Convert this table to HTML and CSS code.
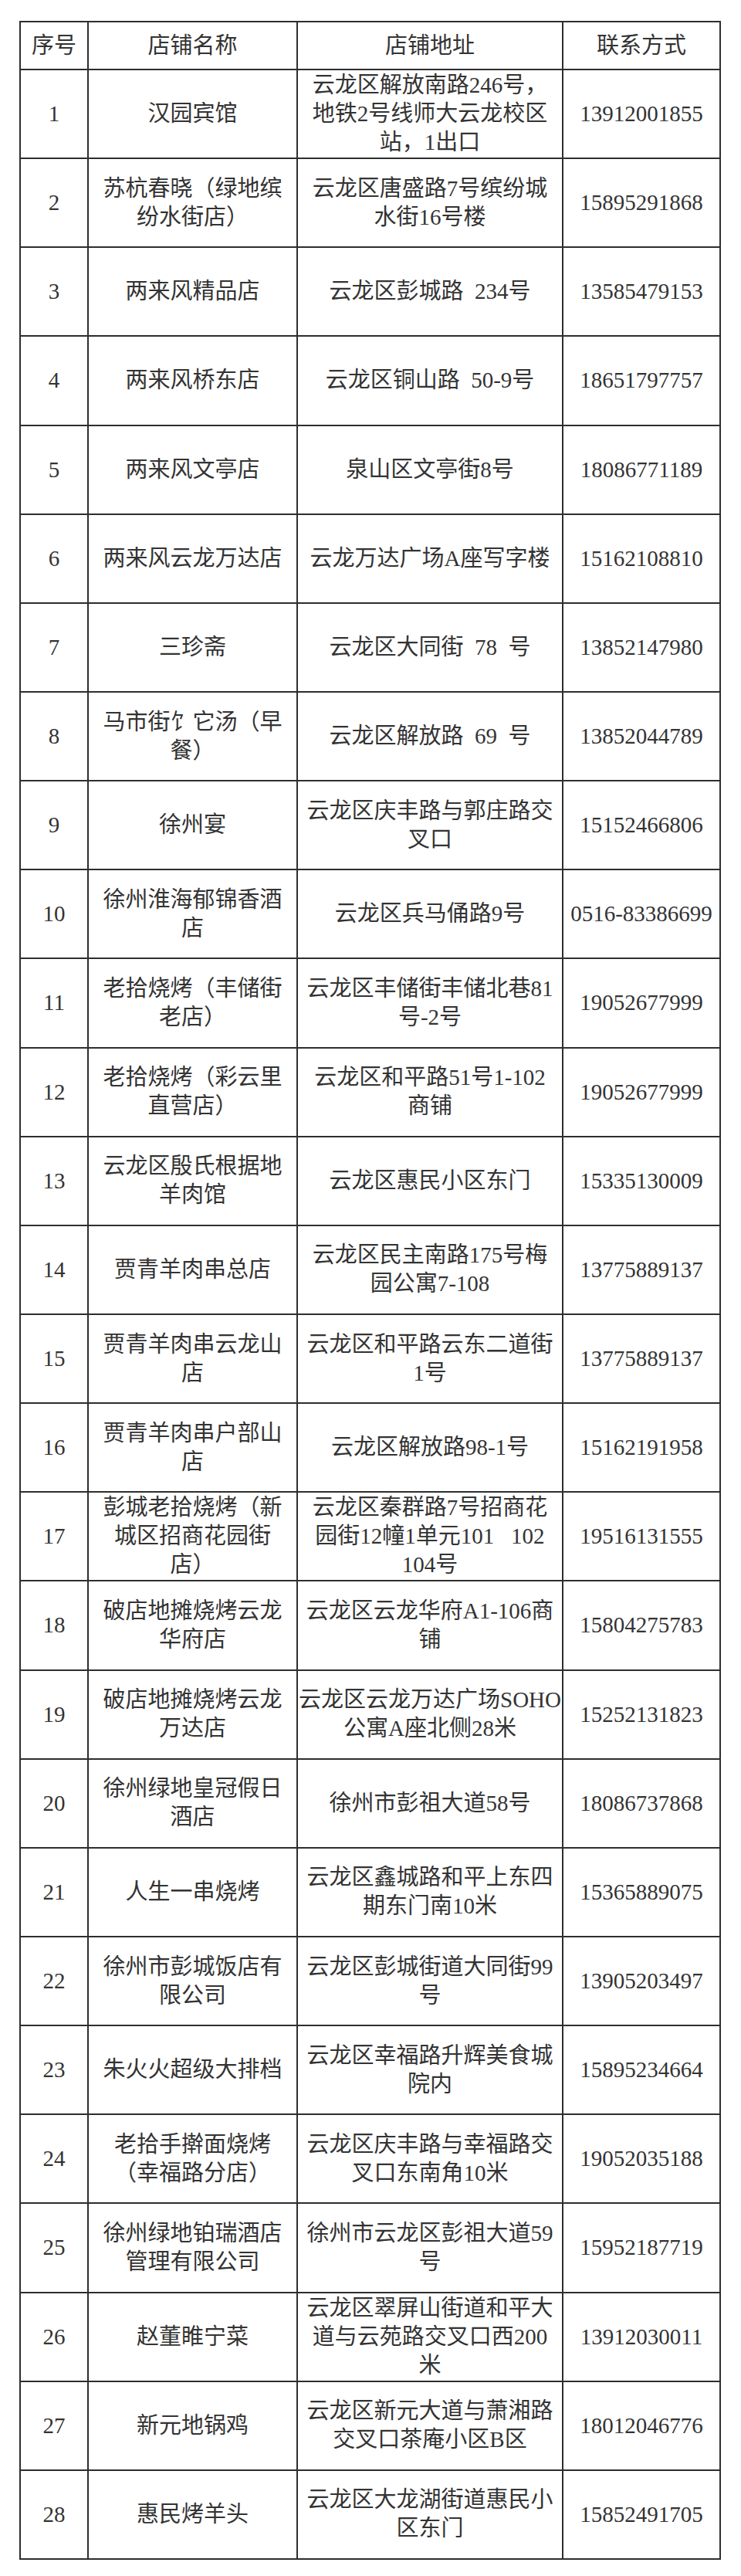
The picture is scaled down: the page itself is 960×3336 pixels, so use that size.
FILE: index.html
```html
<!DOCTYPE html>
<html lang="zh-CN">
<head>
<meta charset="utf-8">
<title>店铺名单</title>
<link rel="stylesheet" href="styles.css">
</head>
<body>
<div class="sheet">
  <div class="cell head">序号</div>
  <div class="cell head">店铺名称</div>
  <div class="cell head">店铺地址</div>
  <div class="cell head">联系方式</div>

  <div class="cell">1</div>
  <div class="cell">汉园宾馆</div>
  <div class="cell">云龙区解放南路246号，<br>地铁2号线师大云龙校区<br>站，1出口</div>
  <div class="cell">13912001855</div>

  <div class="cell">2</div>
  <div class="cell">苏杭春晓（绿地缤<br>纷水街店）</div>
  <div class="cell">云龙区唐盛路7号缤纷城<br>水街16号楼</div>
  <div class="cell">15895291868</div>

  <div class="cell">3</div>
  <div class="cell">两来风精品店</div>
  <div class="cell">云龙区彭城路&nbsp; 234号</div>
  <div class="cell">13585479153</div>

  <div class="cell">4</div>
  <div class="cell">两来风桥东店</div>
  <div class="cell">云龙区铜山路&nbsp; 50-9号</div>
  <div class="cell">18651797757</div>

  <div class="cell">5</div>
  <div class="cell">两来风文亭店</div>
  <div class="cell">泉山区文亭街8号</div>
  <div class="cell">18086771189</div>

  <div class="cell">6</div>
  <div class="cell">两来风云龙万达店</div>
  <div class="cell">云龙万达广场A座写字楼</div>
  <div class="cell">15162108810</div>

  <div class="cell">7</div>
  <div class="cell">三珍斋</div>
  <div class="cell">云龙区大同街&nbsp; 78&nbsp; 号</div>
  <div class="cell">13852147980</div>

  <div class="cell">8</div>
  <div class="cell">马市街饣它汤（早<br>餐）</div>
  <div class="cell">云龙区解放路&nbsp; 69&nbsp; 号</div>
  <div class="cell">13852044789</div>

  <div class="cell">9</div>
  <div class="cell">徐州宴</div>
  <div class="cell">云龙区庆丰路与郭庄路交<br>叉口</div>
  <div class="cell">15152466806</div>

  <div class="cell">10</div>
  <div class="cell">徐州淮海郁锦香酒<br>店</div>
  <div class="cell">云龙区兵马俑路9号</div>
  <div class="cell">0516-83386699</div>

  <div class="cell">11</div>
  <div class="cell">老拾烧烤（丰储街<br>老店）</div>
  <div class="cell">云龙区丰储街丰储北巷81<br>号-2号</div>
  <div class="cell">19052677999</div>

  <div class="cell">12</div>
  <div class="cell">老拾烧烤（彩云里<br>直营店）</div>
  <div class="cell">云龙区和平路51号1-102<br>商铺</div>
  <div class="cell">19052677999</div>

  <div class="cell">13</div>
  <div class="cell">云龙区殷氏根据地<br>羊肉馆</div>
  <div class="cell">云龙区惠民小区东门</div>
  <div class="cell">15335130009</div>

  <div class="cell">14</div>
  <div class="cell">贾青羊肉串总店</div>
  <div class="cell">云龙区民主南路175号梅<br>园公寓7-108</div>
  <div class="cell">13775889137</div>

  <div class="cell">15</div>
  <div class="cell">贾青羊肉串云龙山<br>店</div>
  <div class="cell">云龙区和平路云东二道街<br>1号</div>
  <div class="cell">13775889137</div>

  <div class="cell">16</div>
  <div class="cell">贾青羊肉串户部山<br>店</div>
  <div class="cell">云龙区解放路98-1号</div>
  <div class="cell">15162191958</div>

  <div class="cell">17</div>
  <div class="cell">彭城老拾烧烤（新<br>城区招商花园街<br>店）</div>
  <div class="cell">云龙区秦群路7号招商花<br>园街12幢1单元101&nbsp;&nbsp; 102<br>104号</div>
  <div class="cell">19516131555</div>

  <div class="cell">18</div>
  <div class="cell">破店地摊烧烤云龙<br>华府店</div>
  <div class="cell">云龙区云龙华府A1-106商<br>铺</div>
  <div class="cell">15804275783</div>

  <div class="cell">19</div>
  <div class="cell">破店地摊烧烤云龙<br>万达店</div>
  <div class="cell">云龙区云龙万达广场SOHO<br>公寓A座北侧28米</div>
  <div class="cell">15252131823</div>

  <div class="cell">20</div>
  <div class="cell">徐州绿地皇冠假日<br>酒店</div>
  <div class="cell">徐州市彭祖大道58号</div>
  <div class="cell">18086737868</div>

  <div class="cell">21</div>
  <div class="cell">人生一串烧烤</div>
  <div class="cell">云龙区鑫城路和平上东四<br>期东门南10米</div>
  <div class="cell">15365889075</div>

  <div class="cell">22</div>
  <div class="cell">徐州市彭城饭店有<br>限公司</div>
  <div class="cell">云龙区彭城街道大同街99<br>号</div>
  <div class="cell">13905203497</div>

  <div class="cell">23</div>
  <div class="cell">朱火火超级大排档</div>
  <div class="cell">云龙区幸福路升辉美食城<br>院内</div>
  <div class="cell">15895234664</div>

  <div class="cell">24</div>
  <div class="cell">老拾手擀面烧烤<br>（幸福路分店）</div>
  <div class="cell">云龙区庆丰路与幸福路交<br>叉口东南角10米</div>
  <div class="cell">19052035188</div>

  <div class="cell">25</div>
  <div class="cell">徐州绿地铂瑞酒店<br>管理有限公司</div>
  <div class="cell">徐州市云龙区彭祖大道59<br>号</div>
  <div class="cell">15952187719</div>

  <div class="cell">26</div>
  <div class="cell">赵董睢宁菜</div>
  <div class="cell">云龙区翠屏山街道和平大<br>道与云苑路交叉口西200<br>米</div>
  <div class="cell">13912030011</div>

  <div class="cell">27</div>
  <div class="cell">新元地锅鸡</div>
  <div class="cell">云龙区新元大道与萧湘路<br>交叉口茶庵小区B区</div>
  <div class="cell">18012046776</div>

  <div class="cell">28</div>
  <div class="cell">惠民烤羊头</div>
  <div class="cell">云龙区大龙湖街道惠民小<br>区东门</div>
  <div class="cell">15852491705</div>
</div>
</body>
</html>
```

FILE: styles.css
```css
html, body {
  margin: 0;
  padding: 0;
  background: #ffffff;
}

body {
  padding: 27px 0 0 25px;
  font-family: "Liberation Serif", "Noto Sans CJK SC", serif;
  font-size: 29px;
  line-height: 37px;
  color: #333333;
}

.sheet {
  width: 909px;
  height: 3288px;
  box-sizing: border-box;
  display: grid;
  grid-template-columns: 86px 269px 342px 202px;
  grid-template-rows: 60px repeat(28, 1fr);
  gap: 2px;
  padding: 2px;
  background: #2e2e2e;
}

.cell {
  background: #ffffff;
  display: flex;
  align-items: center;
  justify-content: center;
  text-align: center;
  white-space: nowrap;
  overflow: hidden;
}

.head {
  color: #333333;
}
```
